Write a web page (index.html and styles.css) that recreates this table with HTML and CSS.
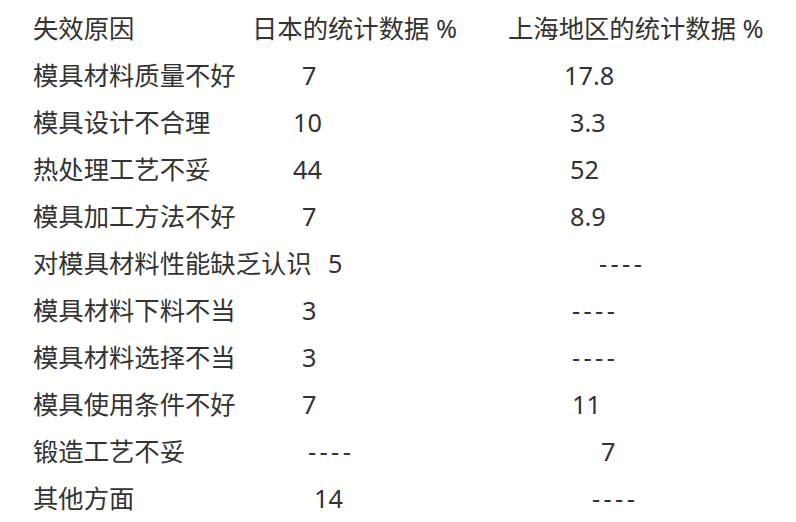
FILE: index.html
```html
<!DOCTYPE html>
<html lang="zh-CN">
<head>
<meta charset="utf-8">
<title>模具失效原因统计</title>
<link rel="stylesheet" href="styles.css">
</head>
<body>
<div class="table">
  <div class="row">
    <div class="cell label">失效原因</div>
    <div class="cell">日本的统计数据 %</div>
    <div class="cell">上海地区的统计数据 %</div>
  </div>
  <div class="row">
    <div class="cell label">模具材料质量不好</div>
    <div class="cell a1">7</div>
    <div class="cell b1">17.8</div>
  </div>
  <div class="row">
    <div class="cell label">模具设计不合理</div>
    <div class="cell a2">10</div>
    <div class="cell b2">3.3</div>
  </div>
  <div class="row">
    <div class="cell label">热处理工艺不妥</div>
    <div class="cell a2">44</div>
    <div class="cell b2">52</div>
  </div>
  <div class="row">
    <div class="cell label">模具加工方法不好</div>
    <div class="cell a1">7</div>
    <div class="cell b2">8.9</div>
  </div>
  <div class="row">
    <div class="cell label">对模具材料性能缺乏认识</div>
    <div class="cell a3">5</div>
    <div class="cell b4"><span class="dash">----</span></div>
  </div>
  <div class="row">
    <div class="cell label">模具材料下料不当</div>
    <div class="cell a1">3</div>
    <div class="cell b3"><span class="dash">----</span></div>
  </div>
  <div class="row">
    <div class="cell label">模具材料选择不当</div>
    <div class="cell a1">3</div>
    <div class="cell b3"><span class="dash">----</span></div>
  </div>
  <div class="row">
    <div class="cell label">模具使用条件不好</div>
    <div class="cell a1">7</div>
    <div class="cell b3">11</div>
  </div>
  <div class="row">
    <div class="cell label">锻造工艺不妥</div>
    <div class="cell a4"><span class="dash">----</span></div>
    <div class="cell b5">7</div>
  </div>
  <div class="row">
    <div class="cell label">其他方面</div>
    <div class="cell a5">14</div>
    <div class="cell b6"><span class="dash">----</span></div>
  </div>
</div>
</body>
</html>
```

FILE: styles.css
```css
html, body {
  margin: 0;
  padding: 0;
  background: #ffffff;
}

body {
  font-family: "Noto Sans", "Noto Sans CJK SC", sans-serif;
  font-size: 25.33px;
  color: #333333;
}

.table {
  padding: 5px 0 0 33px;
}

.row {
  display: grid;
  grid-template-columns: 219px 256px 1fr;
  height: 47px;
  line-height: 47px;
  white-space: nowrap;
}

.cell {
  white-space: nowrap;
}

.dash {
  letter-spacing: 3.4px;
}

/* Japanese column value offsets */
.a1 { padding-left: 50px; }
.a2 { padding-left: 41px; }
.a3 { padding-left: 76px; }
.a4 { padding-left: 56px; }
.a5 { padding-left: 62px; }

/* Shanghai column value offsets */
.b1 { padding-left: 56px; }
.b2 { padding-left: 62px; }
.b3 { padding-left: 64px; }
.b4 { padding-left: 91px; }
.b5 { padding-left: 93px; }
.b6 { padding-left: 84px; }
```
